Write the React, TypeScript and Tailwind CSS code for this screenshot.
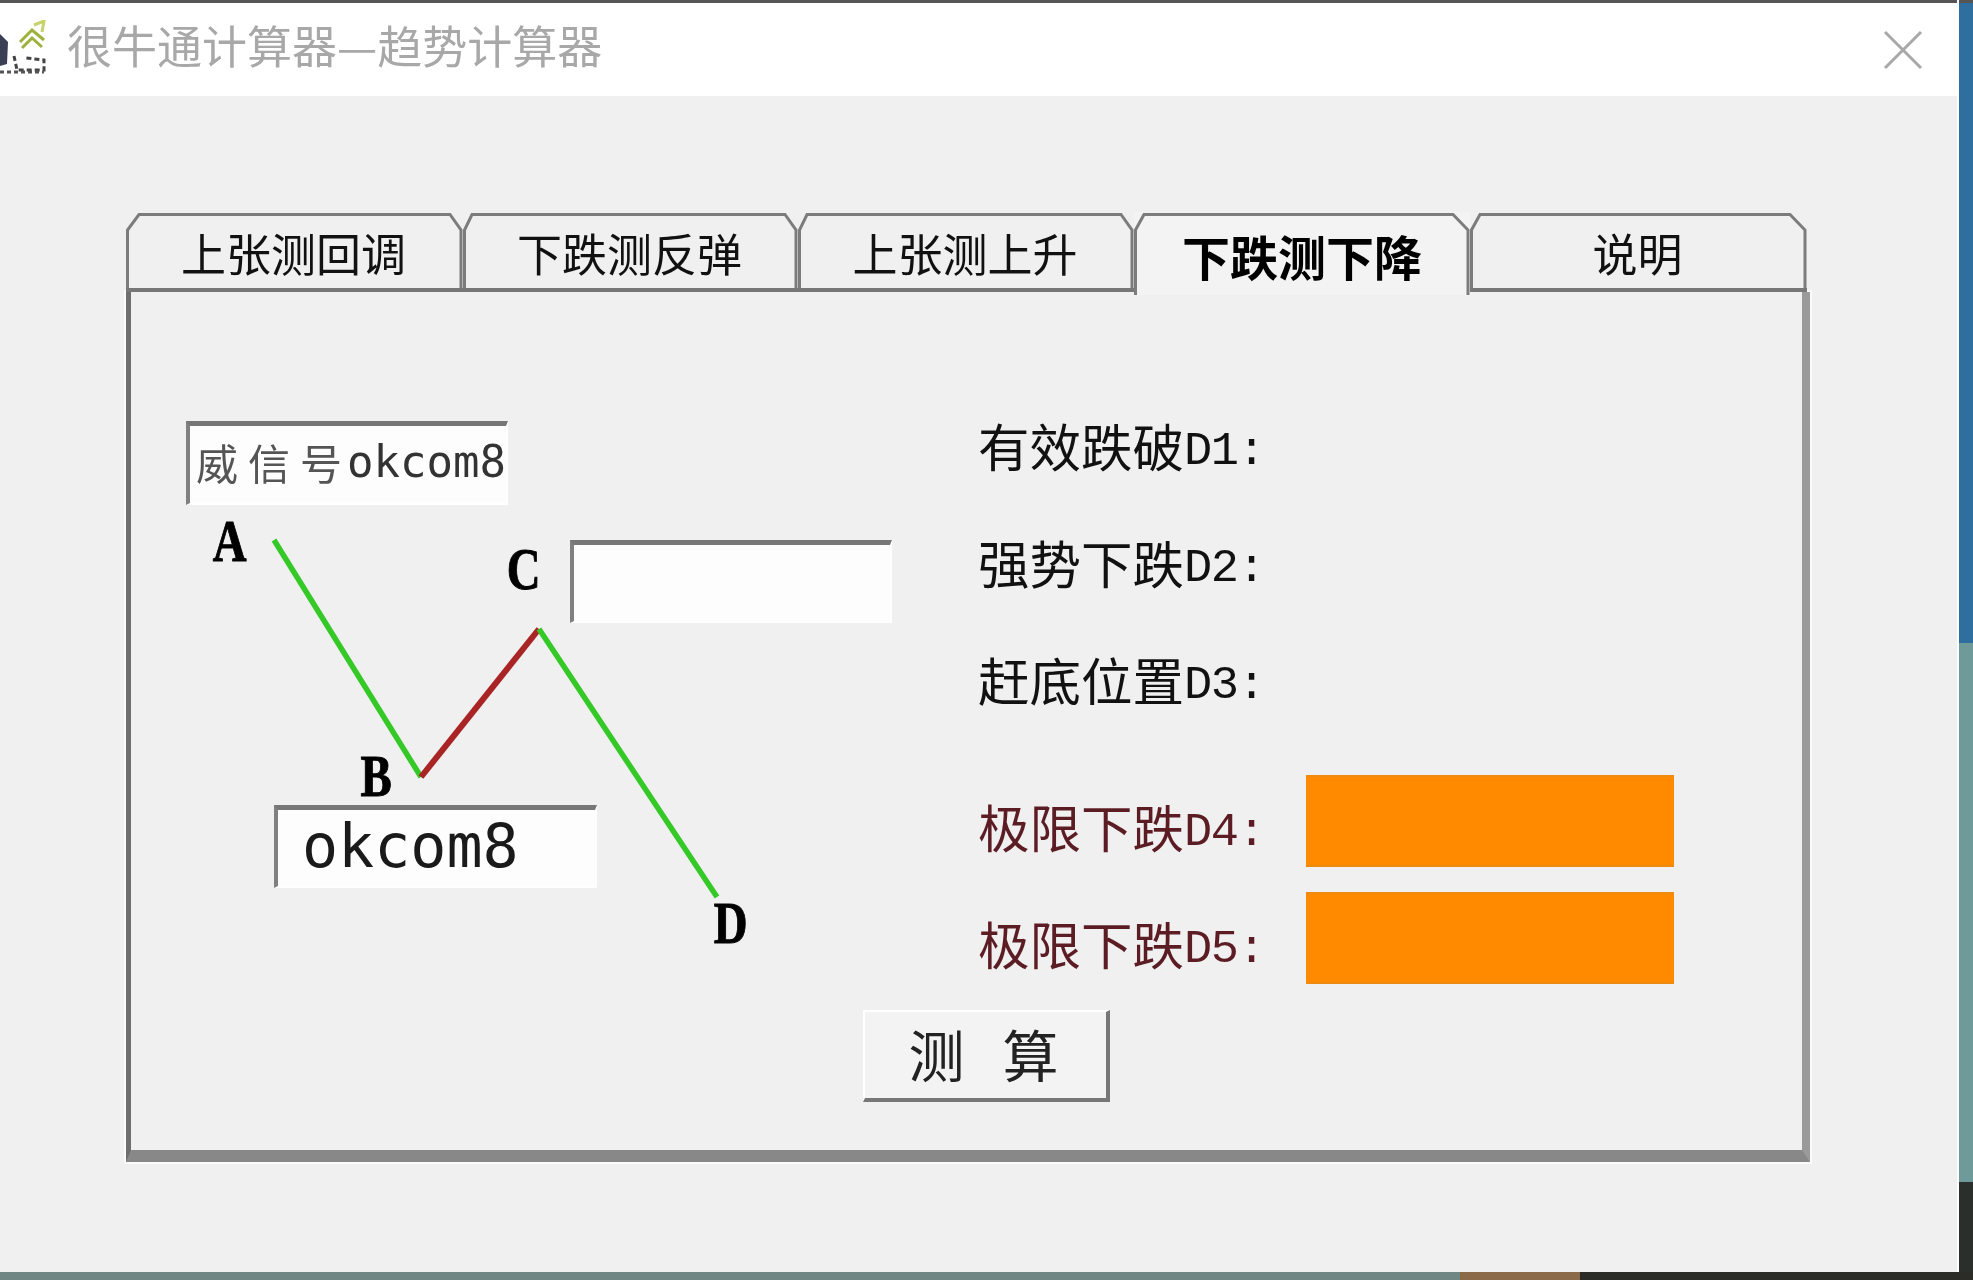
const CJK = '"Noto Sans CJK SC", sans-serif';

const tabs = [
  { label: '上张测回调', w: 337, a: 13, b: 324 },
  { label: '下跌测反弹', w: 335, a: 9, b: 322 },
  { label: '上张测上升', w: 336, a: 9, b: 323 },
  { label: '下跌测下降', w: 336, a: 10, b: 319, active: true },
  { label: '说明', w: 337, a: 10, b: 320 },
];

function Tab({ t }: { t: (typeof tabs)[number] }) {
  return (
    <div
      className={`relative flex items-center justify-center h-[83px] ${t.active ? 'z-10 pt-[6px] pb-[3px] font-bold text-[48px] text-black bg-[#f3f3f3]' : 'pr-[2px] pb-[3px] text-[45px] text-[#111]'}`}
      style={{ width: t.w, fontFamily: CJK }}
    >
      <svg className="absolute inset-0" width={t.w} height={83} fill="none">
        <polyline
          points={`1.5,${t.active ? 83 : 79} 1.5,18 ${t.a},2.5 ${t.b},2.5 ${t.w - 2},18 ${t.w - 2},${t.active ? 83 : 79}`}
          stroke="#7c7c7c"
          strokeWidth={3}
        />
        {!t.active && <line x1="0" y1="78" x2={t.w} y2="78" stroke="#777" strokeWidth={4} />}
      </svg>
      <span className="relative leading-none">{t.label}</span>
    </div>
  );
}

function Field({ className, children }: { className: string; children?: React.ReactNode }) {
  return (
    <div className={`absolute overflow-hidden bg-[#fdfdfd] border-t-[5px] border-l-[4px] border-t-[#777] border-l-[#808080] border-b-2 border-r-2 border-b-white border-r-white ${className}`}>
      {children}
    </div>
  );
}

function Letter({ className, children }: { className: string; children: string }) {
  return (
    <span className={`absolute font-bold text-black text-[60px] leading-none scale-x-[0.78] [-webkit-text-stroke:1px_black] ${className}`} style={{ fontFamily: '"Liberation Serif", serif' }}>
      {children}
    </span>
  );
}

function Row({ name, id, red, box }: { name: string; id: string; red?: boolean; box?: boolean }) {
  return (
    <div className="flex items-center h-[117px]">
      <div className={`flex items-baseline w-[328px] pt-[12px] ${red ? 'text-[#5c1c24]' : 'text-[#111]'}`}>
        <span className="text-[51.5px] leading-none translate-y-[3px]" style={{ fontFamily: CJK }}>{name}</span>
        <span className="text-[47px] leading-none tracking-[-1.5px]" style={{ fontFamily: '"Liberation Mono", monospace' }}>{id}:</span>
      </div>
      {box && <div className="w-[368px] h-[92px] bg-[#ff8a00] border-t-2 border-b-2 border-[#ef8a10]" />}
    </div>
  );
}

export default function App() {
  return (
    <div className="w-[1973px] h-[1280px] overflow-hidden flex flex-col bg-[#6f8685]">
      <div className="flex flex-1 min-h-0 blur-[0.7px]">
        <div className="w-[1959px] flex flex-col bg-[#f0f0f0] border-r-2 border-white">
          <div className="h-[3px] bg-[#555]" />
          <div className="h-[93px] bg-white flex items-center relative pl-[67px] pb-[10px]">
            <svg className="absolute left-0 top-[17px]" width="48" height="56" viewBox="0 0 48 56" fill="none">
              <path d="M20 22 L32 10 L44 20 M22 28 L32 18 L42 27" stroke="#9db23c" strokeWidth="3" />
              <path d="M34 5 L44 1 L42 12" stroke="#c6d36a" strokeWidth="3" />
              <path d="M0 14 L8 22 L7 44 L0 46 Z" fill="#3a3f55" />
              <path d="M14 36 L17 50 L44 50 L44 40 L26 38" stroke="#444" strokeWidth="3" strokeDasharray="5 3" />
              <path d="M0 52 H44" stroke="#555" strokeWidth="3" strokeDasharray="4 3" />
            </svg>
            <span className="text-[45px] leading-none text-[#a8a8a8]" style={{ fontFamily: CJK }}>很牛通计算器—趋势计算器</span>
            <svg className="absolute right-[34px] top-[27px]" width="40" height="40" viewBox="0 0 40 40" stroke="#a8a8a8" strokeWidth="3">
              <path d="M2 2 L38 38 M38 2 L2 38" />
            </svg>
          </div>
          <div className="flex-1 pt-[116px] pl-[126px] flex flex-col">
            <div className="flex w-[1681px] relative z-10">
              {tabs.map((t) => <Tab key={t.label} t={t} />)}
            </div>
            <div className="w-[1684px] h-[870px] -mt-[3px] border-l-[5px] border-l-[#6e6e6e] border-r-[8px] border-r-[#9a9a9a] border-b-[12px] border-b-[#888] outline-2 outline-white/70">
              <div className="flex h-[718px]">
                <div className="relative w-[847px] shrink-0">
                  <Field className="left-[55px] top-[129px] w-[322px] h-[84px] flex items-center pl-[6px] pb-[6px]">
                    <span className="flex items-center whitespace-nowrap text-[#555] gap-[10px] text-[42px] leading-none" style={{ fontFamily: CJK }}>
                      <span>威</span><span>信</span><span className="-mr-[5px]">号</span>
                      <span className="text-[#333] text-[44px]" style={{ fontFamily: '"DejaVu Sans Mono", monospace' }}>okcom8</span>
                    </span>
                  </Field>
                  <Field className="left-[439px] top-[248px] w-[322px] h-[83px]" />
                  <Field className="left-[143px] top-[513px] w-[323px] h-[83px] flex items-center pl-[24px] pb-[4px]">
                    <span className="text-[#1a1a1a] text-[60px] leading-none" style={{ fontFamily: '"DejaVu Sans Mono", monospace' }}>okcom8</span>
                  </Field>
                  <svg className="absolute left-0 top-0" width="847" height="718" fill="none">
                    <path d="M143 248 L290 485" stroke="#35c928" strokeWidth="5.5" />
                    <path d="M290 485 L408 337" stroke="#a92525" strokeWidth="6" />
                    <path d="M408 337 L586 605" stroke="#35c928" strokeWidth="5.5" />
                  </svg>
                  <Letter className="left-[77px] top-[219px]">A</Letter>
                  <Letter className="left-[225px] top-[454px]">B</Letter>
                  <Letter className="left-[371px] top-[247px]">C</Letter>
                  <Letter className="left-[578px] top-[601px]">D</Letter>
                </div>
                <div className="flex flex-col pt-[89px]">
                  <Row name="有效跌破" id="D1" />
                  <Row name="强势下跌" id="D2" />
                  <Row name="赶底位置" id="D3" />
                  <div className="h-[30px]" />
                  <Row name="极限下跌" id="D4" red box />
                  <Row name="极限下跌" id="D5" red box />
                </div>
              </div>
              <div className="ml-[732px] w-[247px] h-[92px] pb-[4px] pr-[4px] bg-[#f3f3f3] border-t-2 border-l-2 border-t-white border-l-white border-r-[4px] border-b-[4px] border-r-[#777] border-b-[#777] flex items-center justify-center gap-[38px] text-[56px] leading-none text-[#222]" style={{ fontFamily: CJK }}>
                <span>测</span><span>算</span>
              </div>
            </div>
          </div>
        </div>
        <div className="flex-1 flex flex-col">
          <div className="h-[3px] bg-[#555]" />
          <div className="h-[640px] bg-[#2f6f9f]" />
          <div className="flex-1 bg-[#6f9a9a]" />
          <div className="h-[90px] bg-[#2a2f2c]" />
        </div>
      </div>
      <div className="h-[8px] flex">
        <div className="w-[1460px] bg-[#6f8685]" />
        <div className="w-[120px] bg-[#8a6a48]" />
        <div className="flex-1 bg-[#2b2b28]" />
      </div>
    </div>
  );
}
